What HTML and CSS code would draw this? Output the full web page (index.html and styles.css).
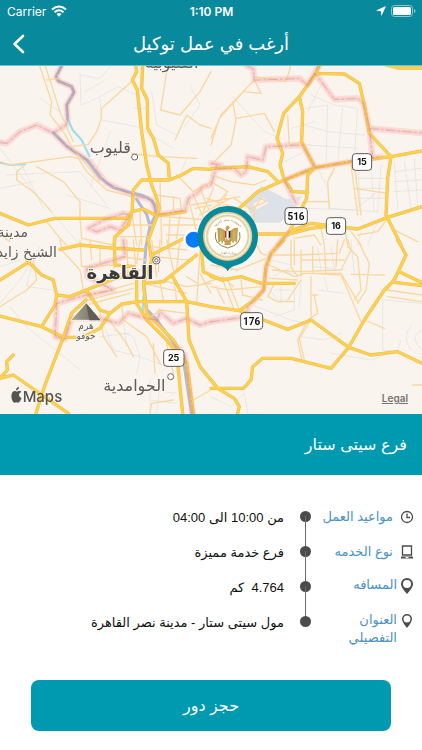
FILE: index.html
```html
<!DOCTYPE html>
<html lang="ar" dir="rtl">
<head>
<meta charset="utf-8">
<meta name="viewport" content="width=device-width, initial-scale=1">
<title>أرغب في عمل توكيل</title>
<link rel="stylesheet" href="styles.css">
</head>
<body>
<header class="top">
  <div class="status" dir="ltr">
    <span class="status-side">Carrier
      <svg width="16" height="12" viewBox="0 0 16 12" aria-hidden="true"><g fill="none" stroke="#fff" stroke-width="2"><path d="M1 4.500Q8-1.500 15 4.500"/><path d="M3.500 7.200Q8 3.200 12.500 7.200"/></g><path fill="#fff" d="M5.500 9Q8 7 10.500 9L8 11.700Z"/></svg>
    </span>
    <span class="status-time">1:10 PM</span>
    <span class="status-side status-end">
      <svg width="10" height="10" viewBox="0 0 10 10" aria-hidden="true"><path fill="#fff" d="M10 0 5.500 10 4.800 5.300 0 4.500Z"/></svg>
      <svg width="25" height="12" viewBox="0 0 25 12" aria-hidden="true"><rect x=".5" y=".5" width="21" height="11" rx="3" fill="none" stroke="#8bc8d2"/><rect x="2" y="2" width="18" height="8" rx="1.500" fill="#fff"/><path d="M23 4v4q1.500-.5 1.500-2T23 4" fill="#8bc8d2"/></svg>
    </span>
  </div>
  <div class="nav" dir="ltr">
    <button class="back" type="button" aria-label="رجوع"><svg width="13" height="20" viewBox="0 0 13 20"><path d="M11 2 2.500 10 11 18" fill="none" stroke="#fff" stroke-width="2.600" stroke-linecap="round" stroke-linejoin="round"/></svg></button>
    <h1 dir="rtl">أرغب في عمل توكيل</h1>
  </div>
</header>
<main>
<section class="map" dir="ltr" aria-label="خريطة">
<svg class="map-art" viewBox="0 0 1266 1044" preserveAspectRatio="xMidYMid slice">
  <defs>
    <radialGradient id="gold"><stop offset=".76" stop-color="#fffefb"/><stop offset=".84" stop-color="#dccb9c"/><stop offset=".9" stop-color="#faf4df"/><stop offset="1" stop-color="#cdb679"/></radialGradient>
    <linearGradient id="stone"><stop offset="0" stop-color="#a9a493"/><stop offset=".5" stop-color="#8b8778"/><stop offset="1" stop-color="#5f5d54"/></linearGradient>
    <g id="borders">
      <g transform="translate(0 -3)"><path d="M185 0 168 35 175 48 215 65 222 82 200 120 203 160 200 178 160 204M0 232 20 235 60 200 110 180 160 204 200 245 270 290 320 355 400 390 455 405 470 450 555 436 565 400 590 385 610 365 633 360 650 300M265 490 310 465 370 445 390 450 360 495 330 485 290 500Z"/></g>
      <g transform="translate(633 -3)"><path d="M105 0 127 12 130 45 265 40 290 60 312 25 370 103 440 100 457 115 475 190 485 280M475 190 633 204M290 60 325 0M0 295 30 300M20 310 70 310 90 330 105 320 110 275 155 285 165 245 275 240 312 308M220 345 312 308 420 290 510 275M220 345 255 415M235 500 200 540"/></g>
      <g transform="translate(0 522)"><path d="M370 0 375 50 260 85 262 110 340 150 258 165 170 190 165 290 195 298 215 235 300 235 355 250 385 220 440 235 470 240M470 245 480 215 520 250 560 235 600 255 633 245M520 310 555 345 578 520"/></g>
      <g transform="translate(633 522)"><path d="M215 0 180 40 165 80 158 150 110 200 110 230 0 245"/></g>
    </g>
    <g id="major">
      <g transform="translate(0 -3)"><path d="M407 0 410 20 397 45 412 75 425 200 440 300 455 360 470 400 478 430 465 470 445 525M428 0 425 70 442 105 443 190 460 220 475 270 505 295 508 345 425 345 400 375 396 440 385 480 345 515 343 540M508 345 545 330 580 310 633 313M0 445 85 480 165 460 380 460 396 440 430 432 470 452 555 440"/></g>
      <g transform="translate(633 -3)"><path d="M325 0 315 25 400 27 445 55 460 120 475 205 540 275 530 340 525 450 545 490 570 540M315 25 265 95 218 145 198 220 215 265 207 300 220 345 245 380 290 382M265 95 275 140 272 230 312 308M312 308 290 330 287 400 235 500 200 540M0 311 110 305 170 320 198 347M220 345 312 308 420 290 540 275 633 258M220 345 140 380 85 430M235 500 300 475 440 492 530 457 633 425M110 507 235 507 300 490 345 485M525 0 560 9 633 9"/></g>
      <g transform="translate(0 522)"><path d="M343 0 345 75 400 80M180 28 240 15 345 25 430 30M80 70 0 120M80 60 125 105 160 120 170 165 210 170 345 115 400 105M170 165 165 195 125 260M0 228 125 260 190 292 250 292 300 265 330 220 365 192 415 185 560 185 633 200M258 150 300 210 330 220M258 180 215 220 190 292 135 435 108 520M0 415 40 405 205 520M0 415 22 390 20 365 40 345M410 120 410 190 440 240 500 300 530 340 548 520M560 185 567 300 600 380 653 445M445 0 455 60 430 130 440 220 520 300 560 370 580 520M430 130 490 125 515 105 590 45M455 45 590-25M515 105 560 185M605 35 610 95 665 120"/></g>
      <g transform="translate(633 522)"><path d="M218 0 180 40 165 80 158 150 130 180 85 212M0 110 35 120 90 110 150 130 250 130M0 200 85 212 230 268 300 240 413 322 360 385 240 355 155 355 125 380 120 420 97 445 0 445M413 322 460 240 520 150 550 120 585 45 560 0M550 127 633 137M565 95 633 128M413 322 480 345 560 335 633 370M0 420 20 445 70 475 85 500 80 520"/></g>
    </g>
  </defs>
  <rect width="1266" height="1044" fill="#f9f5ee"/>
  <g fill="#dce2e8"><path d="M735 405 785 360 860 400 905 390 885 430 840 470 760 470Z"/><path d="M760 414 790 395 805 410 770 430Z" fill="#f9f5ee"/></g>
  <g class="street">
    <g transform="translate(0 -3)"><path d="M240 25 243 120 290 100 355 65 410 90M300 100 305 165 410 185 520 250M335 0 300 40 240 30M455 80 470 180 530 210M400 130 440 130M120 100 180 140M0 250 100 380 240 540M20 330 240 320 320 420M60 290 130 430M330 200 270 370M550 190 600 120 570 60M560 280 540 330M100 350 0 370M200 390 330 430M255 80 310 50"/></g>
    <g transform="translate(633 -3)"><path d="M65 95 160 200 210 220M300 90 370 120 440 130 430 280M285 130 350 120 345 290M395 130 380 290M280 180 350 200 460 210M290 240 440 250M330 60 290 140M320 310 350 370 355 430 500 440M285 430 430 435 500 380M440 300 450 440M480 300 490 440M510 300 500 440M430 340 530 340M430 370 525 370M430 400 525 400M550 290 560 430M580 290 600 430M610 280 620 420M550 320 633 310M550 350 633 345M550 380 633 375M220 290 300 250M225 230 300 240M240 190 310 170M440 540 450 500M470 540 500 470"/></g>
    <g transform="translate(0 522)"><path d="M0 190 60 120 120 20M30 200 80 260 240 390M100 60 80 140 160 150M0 80 60 60M310 250 340 330 420 350 410 400M340 270 400 290 420 350M370 240 380 320M300 290 390 280M450 420 450 520M480 430 470 520M450 450 530 460M450 480 530 490M420 350 500 380"/></g>
    <g transform="translate(633 522)"><path d="M515 180 515 330 570 335M515 180 633 190M570 300 560 330M600 260Q570 290 600 330M633 270Q590 290 633 330M180 90 250 100M185 110 245 80M170 140 200 180 240 180M190 150 240 150M210 140 210 190M250 130 250 210 190 230M270 120 265 200M110 190 240 240 290 250M270 290 340 300 390 280M360 340 480 360 520 345M310 80 400 90M320 20 330 90M340 110 350 150M360 20 370 90M320 150 400 160M0 470 60 500 100 460 110 520M420 0 430 100M180 60 240 75"/></g>
  </g>
  <use href="#borders" class="border-glow"/>
  <g class="river"><path d="M160 200 200 240 260 282 300 335 340 365 400 382Q450 390 465 417L468 445 450 480 438 540 430 640 440 730 470 762 520 830 550 880 562 960 575 1044M410 400 440 445 450 480M185 0 168 32 175 45 215 62 222 79 200 117 203 160"/></g>
  <g class="water"><path d="M205 162 218 192 245 222 268 270"/><path d="M0 290 30 297 75 295M430 690 428 740"/></g>
  <g class="minor">
    <g transform="translate(0 -3)"><path d="M118 0 155 110 150 150 190 200 215 245 300 350M135 0 180 140 220 230M140 45 180 40M400 45 350 90 305 130 303 165 290 200 265 238 215 245M525 0 500 20 482 135 540 150 600 80 633 20M525 225 560 150 600 180 633 190M0 290 30 300 210 275 235 280 260 320 320 375 395 395M75 300 50 320 50 345 105 385 155 440M110 305 190 350 240 410 240 460 245 520 340 540M395 265 430 270 480 275 590 280M140 470 180 520 200 540M0 510 30 530M480 350 485 540M470 390 540 400 545 440M490 455 633 465M490 480 590 480M500 510 580 510M510 455 505 540M540 450 530 520M565 400 600 540M580 390 620 480M600 370 633 450M585 430 633 420M395 440 410 540M420 440 425 540M380 480 460 480M350 515 450 515M520 395 520 440M530 330 580 380 633 350M575 420 720 395M600 450 690 400M620 400 740 440M640 370 610 440M680 390 640 450"/></g>
    <g transform="translate(633 -3)"><path d="M130 45 30 150 0 220M120 55 25 160 0 240M65 110 75 165 60 240 0 300M75 160 160 145 190 200M130 45 150 85 100 80M240 0 225 50 130 35M0 330 60 350 130 360 165 345M230 150 235 240 275 230M355 430 350 350 370 310M285 410 355 410M420 300 440 450M430 300 450 450M0 350 50 380 20 415M70 400 130 440 130 490M130 430 150 400 165 410 120 430M250 520 310 510 330 540M330 490 340 540M400 490 410 540M420 500 450 540M530 460 500 500 440 510M540 490 620 530M430 370 530 385"/></g>
    <g transform="translate(0 522)"><path d="M180 0 185 30 240 90 250 150M240 0 245 80 345 75M270 0 275 60M100 60 110 120 80 150 0 200M300 15 300 75 260 90M310 110 420 90M260 170 400 130M265 180 400 145M270 192 390 160M345 75 330 120M380 0 385 115M400 0 410 110M420 0 410 70M360 20 430 30M360 50 440 60M455 0 470 110M480 0 475 95M500 0 520 90M455 20 560 30M455 50 580 60M540 0 530 90M560 110 600 135 670 110 700 140M300 210 310 290 350 350M320 230 380 310 400 350M365 195 370 240 440 290 480 370M480 120 560 140 633 130M480 130 490 180M520 100 530 185M600 30 590 190M430 130 560 160M440 240 480 210 560 220M600 100 633 160M460 310 465 400M500 310 520 400M580 480 633 450M450 520 455 490 520 480"/></g>
    <g transform="translate(633 522)"><path d="M0 75 80 90 165 55M35 120 70 210M50 120 85 210M90 120 95 165 155 180M0 140 50 150 150 140M130 0 150 40 165 45M180 45 260 45 380 40M175 75 250 110 280 100 390 100 440 185M185 90 270 95 390 90 420 30 410 0M240 0 240 80 260 110M250 0 250 75M270 30 270 110M305 20 305 100 385 105M340 20 345 100M380 0 375 80M270 60 400 60M175 115 260 120M190 130 170 170 200 185 250 185M300 110 300 240 265 295 280 360M310 165 320 220 290 240 260 300 272 360M390 105 410 150 450 245M410 20 440 50 450 150 430 180M440 0 475 70 465 150 440 190M460 240 520 265M420 103 520 105M525 150 633 165M530 170 633 185M530 150 550 110M300 165 320 165M270 120 230 180M400 0 385 40M0 30 60 90M15 140 40 190M605 435H633"/></g>
  </g>
  <use href="#major" class="major-edge"/><use href="#major" class="major-fill"/>
  <use href="#borders" class="border-tint"/><use href="#borders" class="border-line"/>

  <path d="M258 711 212 763H302Z" fill="url(#stone)" stroke="#f8f5e9" stroke-width="3"/><path d="M258 711 302 763H268Z" fill="#5f5d54"/>
  <g class="town"><circle cx="404" cy="273" r="9"/><circle cx="512" cy="932" r="9"/><circle cx="469" cy="583" r="11"/><circle cx="469" cy="583" r="5"/></g>
  <g class="label">
    <text class="mid" x="331" y="262">قليوب</text>
    <text class="mid" x="403" y="974">الحوامدية</text>
    <text class="city" x="360" y="638">القاهرة</text>
    <text class="area" x="84" y="512">مدينة</text>
    <text class="area" x="171" y="573">الشيخ زايد</text>
    <text class="mid" x="515" y="5">القليوبية</text>
    <text class="spot" x="258" y="790">هَرم</text><text class="spot" x="258" y="818">خوفو</text>
  </g>
  <g class="shield">
    <rect x="1057" y="263" width="58" height="50" rx="10"/><text x="1086" y="298">15</text>
    <rect x="855" y="425" width="67" height="50" rx="10"/><text class="narrow" x="888" y="462">516</text>
    <rect x="979" y="455" width="58" height="50" rx="10"/><text x="1008" y="490">16</text>
    <rect x="722" y="740" width="66" height="50" rx="10"/><text class="narrow" x="755" y="777">176</text>
    <rect x="491" y="851" width="61" height="50" rx="10"/><text x="521" y="886">25</text>
  </g>
  <circle cx="581" cy="521" r="31" fill="#fff"/><circle cx="581" cy="521" r="24" fill="#087cf7"/>
  <path d="M592 511A91 91 0 1 1 710 598Q690 602 683 616 676 602 656 598A91 91 0 0 1 592 511Z" fill="#09899c"/>
  <circle cx="683" cy="511" r="74" fill="url(#gold)"/>
  <path id="arc" d="M636 511A47 47 0 0 1 730 511" fill="none"/>
  <text class="seal"><textPath href="#arc" startOffset="50%">جمهورية مصر العربية</textPath></text>
  <text class="seal" x="683" y="564">وزارة العدل</text>
  <g fill="#c2a052"><path d="M677 486Q678 478 686 480L690 485 685 489V494H678Z"/><path d="M676 494Q660 482 652 486L655 530 663 524 666 533 671 524 676 532Z"/><path d="M690 494Q706 482 714 486L711 530 703 524 700 533 695 524 690 532Z"/><path d="M677 518H689L693 537H673Z"/></g>
  <path d="M647 500Q638 535 683 546 728 535 719 500" fill="none" stroke="#8c8249" stroke-width="3"/>
  <path d="M675 495H680V519L675 513Z" fill="#c7302f"/><path d="M680 495H686V523L680 519Z" fill="#fff"/><path d="M686 495H691V513L686 519Z" fill="#242424"/>
  <path d="M661 493V526M666 495V526M700 495V526M705 493V526" stroke="#efe0ae" stroke-width="1"/>
  <g fill="#55544f"><path d="M55 975Q61 973 64 978 56 981 57 988 58 994 65 997 60 1009 55 1010 49 1007 43 1010C35 1009 29 982 41 976 48 973 49 980 55 975Z"/><path d="M48 973Q48 964 57 962 57 971 48 973Z"/><text class="brand" x="68" y="1009">Maps</text></g>
</svg>
<a class="legal" href="#legal">Legal</a>
</section>
<h2 class="branch">فرع سيتى ستار</h2>
<dl class="details">
  <div class="row">
    <dt><svg width="16" height="14" viewBox="0 0 16 14" aria-hidden="true"><g fill="none" stroke="#4b4b4d" stroke-width="1.300"><circle cx="8" cy="7" r="5.500"/><path d="M8 3.500V7.500H11"/></g></svg><span>مواعيد العمل</span></dt>
    <dd>من 10:00 الى 04:00</dd>
  </div>
  <div class="row">
    <dt><svg width="16" height="14" viewBox="0 0 16 14" aria-hidden="true"><path d="M3.500 1H12.500V10H3.500Z" fill="none" stroke="#4b4b4d" stroke-width="1.300"/><path d="M2 11.500H14V13.500H2Z" fill="#4b4b4d"/><path d="M6.500 12.500H9.500" stroke="#fff"/></svg><span>نوع الخدمه</span></dt>
    <dd>فرع خدمة مميزة</dd>
  </div>
  <div class="row near">
    <dt><svg width="16" height="16" viewBox="0 0 16 16" aria-hidden="true"><path fill="#4b4b4d" fill-rule="evenodd" d="M8 16Q2 9.500 2 6A6 6 0 0 1 14 6Q14 9.500 8 16ZM8 2A4 4 0 1 0 8 10 4 4 0 0 0 8 2Z"/></svg><span>المسافه</span></dt>
    <dd>4.764&nbsp; كم</dd>
  </div>
  <div class="row near">
    <dt><svg width="16" height="16" viewBox="0 0 16 16" aria-hidden="true"><path fill="#4b4b4d" fill-rule="evenodd" d="M8 15Q3 9 3 6A5 5 0 0 1 13 6Q13 9 8 15ZM8 2.500A3.500 3.500 0 1 0 8 9.500 3.500 3.500 0 0 0 8 2.500Z"/></svg><span>العنوان التفصيلي</span></dt>
    <dd>مول سيتى ستار - مدينة نصر القاهرة</dd>
  </div>
</dl>
<div class="action"><button class="book" type="button">حجز دور</button></div>
</main>
</body>
</html>
```
FILE: styles.css
```css
* { box-sizing: border-box; }
body {
  margin: 0;
  background: #fff;
  color: #111;
  font-family: "Liberation Sans", "DejaVu Sans", sans-serif;
  font-size: 13px;
}
h1, h2, dl, dd { margin: 0; font-weight: 400; }
button { border: 0; font: inherit; color: inherit; cursor: pointer; }

.top { background: #09899c; color: #fff; }
.status {
  display: grid;
  grid-template-columns: 1fr auto 1fr;
  align-items: center;
  height: 22px;
  padding: 0 6px 0 7px;
  font: 12px Inter, sans-serif;
}
.status-side { display: flex; align-items: center; gap: 5px; }
.status-end { justify-content: flex-end; }
.status-time { font-weight: 600; }
.nav {
  display: grid;
  grid-template-columns: 40px 1fr 40px;
  align-items: center;
  height: 44px;
  border-bottom: 1px solid #6cc3cd;
}
.back { display: flex; padding: 8px 12px; background: none; }
.nav h1 { text-align: center; font-size: 18px; line-height: 24px; }

.map { position: relative; overflow: hidden; }
.map-art { display: block; width: 100%; }
.legal {
  position: absolute;
  right: 14px;
  bottom: 9px;
  color: #77746f;
  font: 600 10px/14px Inter, sans-serif;
}
.map-art path { stroke-linejoin: round; stroke-linecap: round; }
.street, .minor, .water, .river, .major-edge, .major-fill,
.border-glow, .border-tint, .border-line { fill: none; }
.street { stroke: #e1dedb; stroke-width: 2; }
.minor { stroke: #fad7a0; stroke-width: 4; }
.water { stroke: #9bdcef; stroke-width: 6; }
.river { stroke: #b5b9d2; stroke-width: 9; }
.major-edge { stroke: #f3b75c; stroke-width: 10; }
.major-fill { stroke: #fbd24a; stroke-width: 7; }
.border-glow { stroke: #fce1dc; stroke-width: 20; }
.border-tint { stroke: #f4a59c; stroke-width: 14; opacity: .15; }
.border-tint path, .border-line path { stroke-linecap: butt; }
.border-line { stroke: #b9777d; stroke-width: 2; stroke-dasharray: 28 8 6 8; opacity: .8; }
.town { fill: #fff; stroke: #6a6866; stroke-width: 3; }
.label text {
  direction: rtl;
  text-anchor: middle;
  font-family: "DejaVu Sans", sans-serif;
  fill: #5d5a57;
  stroke: #f9f5ee;
  stroke-width: 6;
  paint-order: stroke;
}
.label .mid { font-size: 48px; }
.label .area { font-size: 42px; text-anchor: start; }
.label .spot { font-size: 27px; }
.label .city { font-size: 54px; font-weight: 700; fill: #3b3937; }
.shield rect { fill: #fff; stroke: #5c5c5c; stroke-width: 3; }
.shield text { text-anchor: middle; font: 700 27px Inter, sans-serif; fill: #111; }
.shield .narrow { font: 700 30px "Liberation Sans Narrow", "Roboto", sans-serif; }
.seal { direction: rtl; text-anchor: middle; font: 10px "DejaVu Sans", sans-serif; fill: #a88a4a; }
.brand { font: 500 45px Inter, sans-serif; }

.branch {
  padding: 18px 15px;
  background: #009ab0;
  color: #fff;
  font-size: 16px;
  line-height: 25px;
}
.details { padding: 24px 7px 0; }
.row {
  display: grid;
  grid-template-columns: 104px 11px 1fr;
  min-height: 35px;
  position: relative;
}
.row::before {
  content: "";
  grid-column: 2;
  grid-row: 1;
  width: 11px;
  height: 11px;
  margin-top: 12px;
  border-radius: 50%;
  background: #4b4b4d;
}
.row:not(:last-child)::after {
  content: "";
  position: absolute;
  top: 17px;
  right: 109px;
  width: 1px;
  height: 100%;
  background: #6c6c6e;
}
.row dt {
  grid-column: 1;
  grid-row: 1;
  display: flex;
  gap: 6px;
  padding: 9px 0 0 10px;
  color: #4b93c5;
  line-height: 18px;
}
.row dt svg { flex: none; margin-top: 2px; }
.row.near dt { gap: 2px; padding-top: 7px; }
.row dt span { flex: 1; }
.row:not(.near) dt { padding-left: 0; }
.row dd { grid-column: 3; grid-row: 1; padding: 9px 16px 0 0; line-height: 20px; }

.action { padding: 33px 31px 20px; }
.book {
  display: block;
  width: 100%;
  height: 51px;
  border-radius: 8px;
  background: #009ab0;
  color: #fff;
  font-size: 16px;
}
```
